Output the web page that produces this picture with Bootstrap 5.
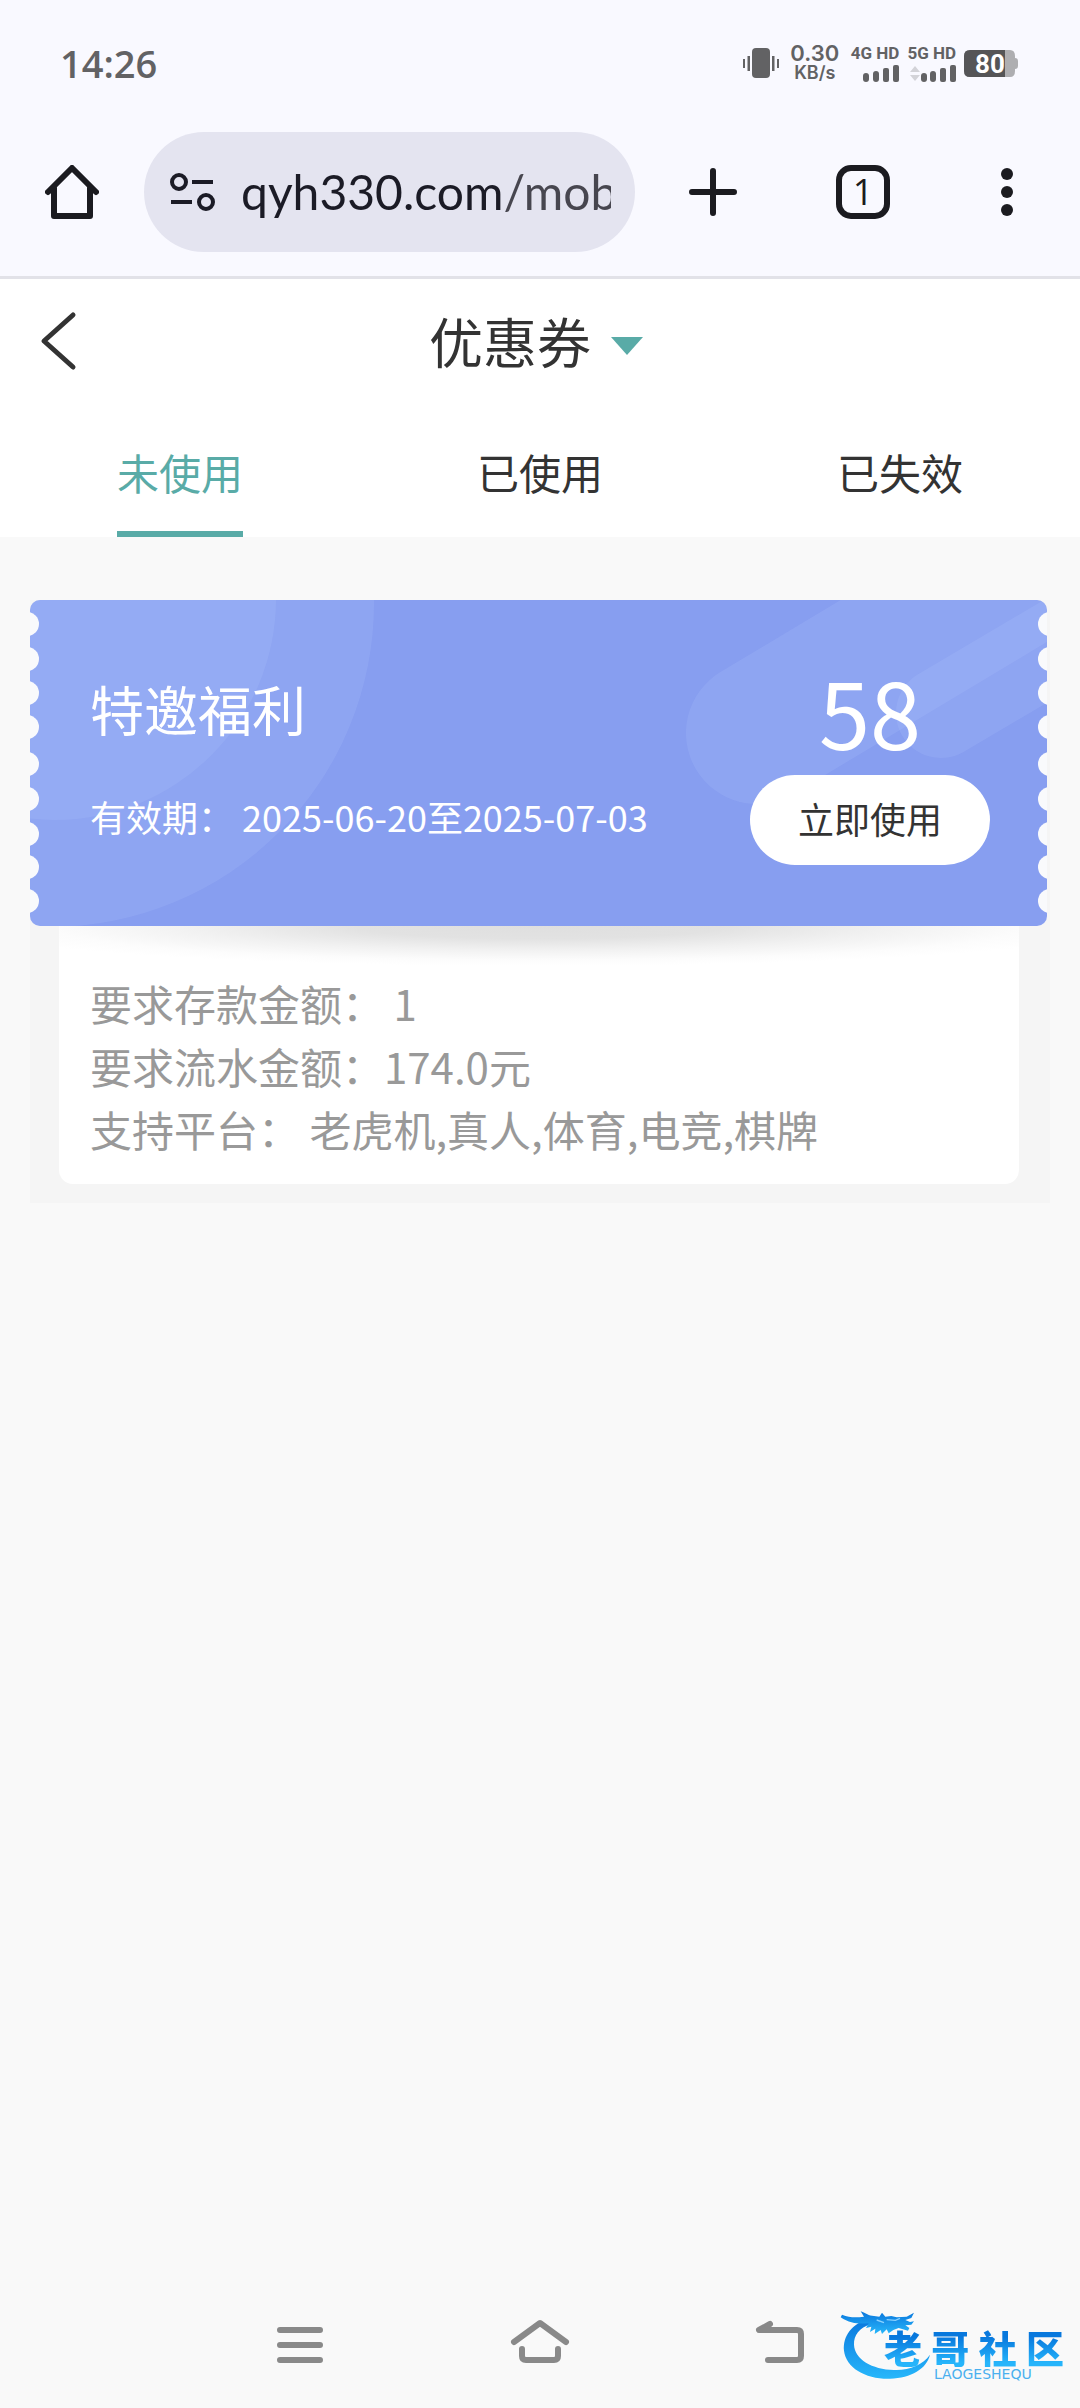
<!DOCTYPE html>
<html lang="zh-CN">
<head>
<meta charset="utf-8">
<meta name="viewport" content="width=device-width, initial-scale=1">
<title>优惠券</title>
<link href="https://cdn.jsdelivr.net/npm/bootstrap@5.3.0/dist/css/bootstrap.min.css" rel="stylesheet">
<style>
  body { font-family: "Noto Sans CJK SC", sans-serif; background: #f9f9f9; color: #333; }
  svg { display: block; flex: none; }
  a { color: inherit; text-decoration: none; }
  button { color: inherit; background: none; border: 0; padding: 0; }

  /* phone status bar and browser bar */
  .chrome-top { background: #f9f9ff; border-bottom: 3px solid #e2e2e8; color: #1b1b20; }
  .status { height: 126px; padding: 0 62px 0 60px; color: #626264; }
  .clock { font: 600 38px/48px "Open Sans", sans-serif; }
  .speed { font: 600 22px/20px Inter, sans-serif; width: 48px; margin: 0 12px; }
  .speed .unit { font-size: 18px; }
  .sim { font: 700 17px/16px Roboto, sans-serif; gap: 4px; }
  .battery { position: relative; }
  .battery b { position: absolute; left: 11px; top: 0; font: 700 26px/28px Roboto, sans-serif; color: #fff; }
  .toolbar { padding: 6px 67px 24px 45px; }
  .pill { height: 120px; border-radius: 60px; background: #e4e4f0; padding: 0 24px 0 26px; margin: 0 54px 0 45px; gap: 26px; min-width: 0; }
  .pill input { border: 0; padding: 0; min-width: 0; height: 80px; outline: 0; font: 400 48px/80px Lato, sans-serif;
    background: linear-gradient(to right, #1b1b26 264px, #47464f 264px); -webkit-background-clip: text; background-clip: text; -webkit-text-fill-color: transparent; }
  .tabs-open { width: 54px; height: 54px; border: 6px solid #1b1b20; border-radius: 15px; font: 500 36px/42px "Open Sans", sans-serif; margin: 0 111px 0 99px; }

  /* page heading and filter */
  .page-head { height: 124px; padding: 0 40px; }
  .page-head h1 { font-size: 54px; line-height: 80px; font-weight: 400; }
  .page-head .picker { gap: 20px; padding-right: 8px; }
  .side { width: 60px; }
  .filters { font-size: 42px; line-height: 63px; }
  .filters a { padding: 37px 0 28px; border-bottom: 6px solid transparent; }
  .filters a.active { color: #59aba7; border-color: #59aba7; }

  /* voucher */
  .voucher { margin: 63px 30px 0; background: #f5f5f5; padding-bottom: 19px; }
  .ticket { position: relative; color: #fff; padding: 55px 57px 61px 60px; margin-right: 3px; }
  .ticket > svg { position: absolute; inset: 0; width: 100%; height: 100%; }
  .ticket > div { position: relative; }
  .ticket-name { font-size: 54px; line-height: 80px; font-weight: 400; margin: 14px 0 40px; }
  .ticket-date { font-size: 36px; line-height: 54px; }
  .ticket-sum { font-size: 92px; line-height: 110px; margin-bottom: 10px; }
  .btn-use { width: 240px; height: 90px; border-radius: 45px; background: #fff; color: #333; font-size: 36px; line-height: 54px; padding-bottom: 4px; }
  .terms { position: relative; margin: 0 31px 0 29px; padding: 45px 31px 24px; border-radius: 0 0 14px 14px; background: #fff; color: #999; font-size: 42px; line-height: 63px; overflow: hidden; }
  .terms::before { content: ""; position: absolute; left: 0; right: 0; top: 0; height: 40px;
    background: radial-gradient(60% 100% at 50% 0, #dfdfdf 0, #e2e2e2 32%, #f1f1f1 60%, #fcfcfc 85%, #fff 100%); }

  /* system keys */
  .keys { gap: 180px; padding-bottom: 33px; color: #898989; }
  .brand { position: absolute; right: 16px; bottom: 20px; width: 224px; height: 80px; }
  .brand svg { position: absolute; left: 0; top: 0; }
  .brand strong { position: absolute; right: 0; top: 19px; display: flex; justify-content: space-between; width: 180px; font-size: 38px; line-height: 40px; font-weight: 900;
    background: linear-gradient(#0878dd 25%, #26b5fb 90%); -webkit-background-clip: text; background-clip: text; color: transparent; }
  .brand .latin { position: absolute; left: 94px; top: 60px; font: 14px/12px "DejaVu Sans", sans-serif; color: #4ab0ef; }
</style>
</head>
<body>
<div class="d-flex flex-column min-vh-100 position-relative">
  <header class="chrome-top">
    <div class="status d-flex align-items-center">
      <span class="clock me-auto">14:26</span>
      <svg width="36" height="30" viewBox="0 0 36 30" fill="#626264"><rect x="9" width="18" height="30" rx="4"/><path d="M0 11h2v9H0zM4.500 8h2.500v15H4.500zM29 8h2.500v15H29zM34 11h2v9h-2z"/></svg>
      <div class="speed text-center d-flex flex-column align-items-center"><span>0.30</span><span class="unit">KB/s</span></div>
      <div class="sim d-flex flex-column align-items-end me-2">4G HD
        <svg width="36" height="17" fill="#626264"><rect y="8" width="6" height="9" rx="3"/><rect x="10" y="6" width="6" height="11" rx="3"/><rect x="20" y="3" width="6" height="14" rx="2"/><rect x="30" width="6" height="17" rx="2"/></svg>
      </div>
      <div class="sim d-flex flex-column align-items-end me-2">5G HD
        <svg width="48" height="17" fill="#626264"><path fill="#d3d3d8" d="M2 7l5-6 5 6zM2 10h10l-5 6z"/><rect x="13" y="8" width="6" height="9" rx="3"/><rect x="22" y="6" width="6" height="11" rx="3"/><rect x="32" y="3" width="6" height="14" rx="2"/><rect x="42" width="6" height="17" rx="2"/></svg>
      </div>
      <div class="battery">
        <svg width="54" height="27"><path d="M6 0h40q5 0 5 6v2q3 0 3 3v5q0 3-3 3v2q0 6-5 6H6q-6 0-6-6V6q0-6 6-6z" fill="#aeaeb1"/><path d="M41 0H6Q0 0 0 6v15q0 6 6 6h35z" fill="#555557"/></svg>
        <b>80</b>
      </div>
    </div>
    <div class="toolbar d-flex align-items-center">
      <a href="#" aria-label="主页"><svg width="54" height="54" fill="none" stroke="#1b1b20" stroke-width="6" stroke-linecap="round" stroke-linejoin="round"><path d="M3 27L27 3l24 24M9 23v28h36V23"/></svg></a>
      <div class="pill d-flex align-items-center flex-grow-1">
        <svg width="45" height="39" fill="none" stroke="#1b1b26" stroke-width="4"><circle cx="9" cy="9" r="7"/><circle cx="36" cy="29" r="7"/><path d="M22 9h21M1 29h21"/></svg>
        <input class="flex-grow-1" type="text" aria-label="网址" value="qyh330.com/mob">
      </div>
      <button type="button" aria-label="新标签页"><svg width="48" height="48" stroke="#1b1b20" stroke-width="6" stroke-linecap="round"><path d="M24 3v42M3 24h42"/></svg></button>
      <button type="button" class="tabs-open flex-shrink-0">1</button>
      <button type="button" aria-label="菜单"><svg width="12" height="48" fill="#1b1b20"><circle cx="6" cy="6" r="6"/><circle cx="6" cy="24" r="6"/><circle cx="6" cy="42" r="6"/></svg></button>
    </div>
  </header>

  <div class="bg-white">
    <div class="page-head d-flex align-items-center justify-content-between">
      <a class="side" href="#" aria-label="返回"><svg width="38" height="64" fill="none" stroke="#333" stroke-width="5" stroke-linecap="round" stroke-linejoin="round"><path d="M33 6L4 32l29 26"/></svg></a>
      <button type="button" class="picker d-flex align-items-center"><h1 class="m-0">优惠券</h1><svg width="32" height="20" class="mt-2" fill="#59aba7"><path d="M0 2h32L16 20z"/></svg></button>
      <span class="side"></span>
    </div>
    <nav class="filters row g-0 text-center">
      <div class="col d-flex justify-content-center"><a class="active" href="#">未使用</a></div>
      <div class="col d-flex justify-content-center"><a href="#">已使用</a></div>
      <div class="col d-flex justify-content-center"><a href="#">已失效</a></div>
    </nav>
  </div>

  <main>
    <section class="voucher">
      <div class="ticket d-flex justify-content-between">
        <svg viewBox="0 0 1017 326" preserveAspectRatio="none" aria-hidden="true">
          <defs><clipPath id="edge"><rect width="1017" height="326" rx="10"/></clipPath></defs>
          <g clip-path="url(#edge)">
            <rect width="1017" height="326" fill="#879ef0"/>
            <g fill="#b9d2ff" fill-opacity=".15"><circle cx="20" cy="3" r="324"/><circle cx="25" cy="-1" r="221"/></g>
            <g stroke="#b9d2ff" stroke-opacity=".15" stroke-linecap="round"><path d="M727 133l400-240" stroke-width="142"/><path d="M911 113l300-177" stroke-width="90"/></g>
            <g fill="#f9fafc">
              <circle cx="-3" cy="24" r="12"/><circle cx="-3" cy="59" r="12"/><circle cx="-3" cy="93" r="12"/><circle cx="-3" cy="127" r="12"/><circle cx="-3" cy="164" r="12"/><circle cx="-3" cy="199" r="12"/><circle cx="-3" cy="234" r="12"/><circle cx="-3" cy="267" r="12"/><circle cx="-3" cy="301" r="12"/>
              <circle cx="1020" cy="24" r="12"/><circle cx="1020" cy="59" r="12"/><circle cx="1020" cy="93" r="12"/><circle cx="1020" cy="127" r="12"/><circle cx="1020" cy="164" r="12"/><circle cx="1020" cy="199" r="12"/><circle cx="1020" cy="234" r="12"/><circle cx="1020" cy="267" r="12"/><circle cx="1020" cy="301" r="12"/>
            </g>
          </g>
        </svg>
        <div>
          <h2 class="ticket-name">特邀福利</h2>
          <div class="ticket-date">有效期： 2025-06-20至2025-07-03</div>
        </div>
        <div class="text-center">
          <div class="ticket-sum">58</div>
          <button type="button" class="btn-use">立即使用</button>
        </div>
      </div>
      <div class="terms">
        <div>要求存款金额： 1</div>
        <div>要求流水金额：174.0元</div>
        <div>支持平台： 老虎机,真人,体育,电竞,棋牌</div>
      </div>
    </section>
  </main>

  <nav class="keys d-flex justify-content-center mt-auto">
    <a href="#" aria-label="最近任务"><svg width="60" height="60" stroke="currentColor" stroke-width="6" stroke-linecap="round"><path d="M10 15h40M10 30h40M10 45h40"/></svg></a>
    <a href="#" aria-label="桌面"><svg width="60" height="60" fill="none" stroke="currentColor" stroke-width="6" stroke-linecap="round" stroke-linejoin="round"><path d="M4 27L30 8l26 19M12 34v7q0 4 4 4h28q4 0 4-4v-7"/></svg></a>
    <a href="#" aria-label="返回上一页"><svg width="60" height="60" fill="none" stroke="currentColor" stroke-width="6" stroke-linecap="round" stroke-linejoin="round"><path d="M20 9L9 15h38q4 0 4 4v22q0 4-4 4H18"/><path d="M20 9L9 15h11z" fill="currentColor" stroke-width="2"/></svg></a>
  </nav>

  <div class="brand">
    <svg width="96" height="76" viewBox="60 60 288 228" aria-hidden="true">
      <defs><linearGradient id="sea" x1="0" y1="0" x2="0" y2="1"><stop offset="0" stop-color="#0a76dc"/><stop offset="1" stop-color="#27b7fb"/></linearGradient></defs>
      <g fill="url(#sea)">
        <path d="M150 92C95 105 68 145 72 188c6 52 66 86 138 84 64-2 110-30 120-72-22 30-62 48-108 46-66-2-118-32-120-76-1-28 16-50 50-62z"/>
        <path d="M66 80c24 10 44 8 66 6l-10-16c16 6 24 14 40 14l16 2 8-12 10 12 18-2 16 4 30-2 22-12-8 16-18 6 14 6 12-2-8 10-18 2 12 8-4 8-28-8-16 6-14 10-6-12-14 14-4-12-18 12 2-16-16 10 4-16-16 4 8-14c-26 2-56 2-84-18z"/>
      </g>
      <path d="M200 95l26 2 14-6M170 96l22 8" stroke="#8bd2ff" stroke-width="4" fill="none"/>
    </svg>
    <strong>老<span>哥</span><span>社</span><span>区</span></strong>
    <span class="latin">LAOGESHEQU</span>
  </div>
</div>
<script src="https://cdn.jsdelivr.net/npm/bootstrap@5.3.0/dist/js/bootstrap.bundle.min.js"></script>
</body>
</html>
